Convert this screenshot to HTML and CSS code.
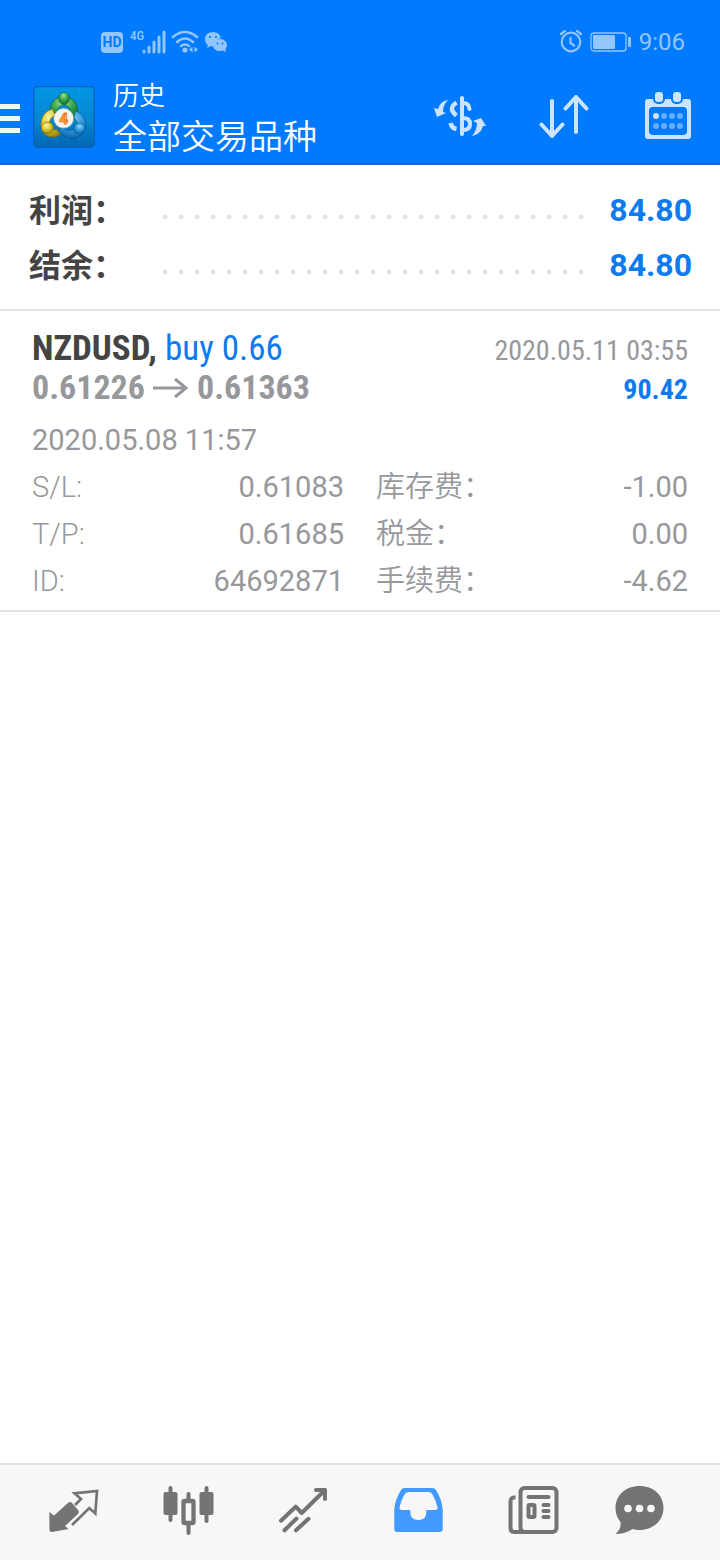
FILE: index.html
```
<!DOCTYPE html>
<html lang="zh-CN">
<head>
<meta charset="utf-8">
<meta name="viewport" content="width=device-width, initial-scale=1">
<title>历史</title>
<link rel="stylesheet" href="styles.css">
</head>
<body>
<div class="app">
  <header class="header">
    <div class="status">
      <div class="status-group">
        <span class="hd">HD</span>
        <span class="signal"><span class="signal-label">4G</span><svg width="24" height="24" viewBox="1 0 24 24" aria-hidden="true"><path d="M3 21v1M8 17v5M13 12v10M18 7v15M23 2v20" stroke="currentColor" stroke-width="3" stroke-linecap="round"/></svg></span>
        <svg width="28" height="24" viewBox="0 0 28 24" aria-hidden="true"><g fill="none" stroke="currentColor" stroke-width="2.6" stroke-linecap="round"><path d="M2 7Q14-3 26 7M6 12q8-7 16 0M10 16q4-3 8 0"/></g><circle cx="14" cy="20" r="2.6" fill="currentColor"/><path d="M21.500 16.500v6L18 19.500zM23.500 16.500v6l3.500-3z" fill="currentColor"/></svg>
        <svg width="24" height="24" viewBox="0 0 24 24" aria-hidden="true"><path d="M9 2C4 2 1 5 1 9q0 4 3 6l-1 3 4-2 4 .5Q10 9 17 8 15 2 9 2z" fill="currentColor"/><path d="M16 9c-4 0-7 3-7 6 0 4 3 6 7 6l3-.5 3 1.500-.6-3Q23 17 23 15c0-3-3-6-7-6z" fill="currentColor"/><g fill="#007aff"><circle cx="6" cy="7" r="1.100"/><circle cx="12" cy="7" r="1.100"/><circle cx="13.500" cy="13.500" r="1"/><circle cx="18.500" cy="13.500" r="1"/></g></svg>
      </div>
      <div class="status-group status-right">
        <svg width="24" height="24" viewBox="0 0 24 24" aria-hidden="true"><g fill="none" stroke="currentColor" stroke-width="2.200" stroke-linecap="round"><circle cx="12" cy="12" r="9.300"/><path d="M11.500 8v5l3.500 2.500M2 4l4-3M22 4l-4-3"/></g></svg>
        <svg width="42" height="24" viewBox="0 0 42 24" aria-hidden="true"><rect x="1" y="3" width="35" height="18" rx="3" fill="none" stroke="currentColor" stroke-width="1.300"/><rect x="3" y="5" width="22" height="14" rx="1" fill="currentColor"/><rect x="38" y="7" width="3" height="10" rx="1" fill="currentColor"/></svg>
        <time class="clock">9:06</time>
      </div>
    </div>
    <div class="bar">
      <button class="icon-button menu" aria-label="菜单"><span class="menu-line"></span><span class="menu-line"></span><span class="menu-line"></span></button>
      <svg class="logo" viewBox="25 25 184 184" aria-hidden="true">
        <defs>
          <linearGradient id="tile" x1="0" y1="0" x2="0" y2="1"><stop offset="0" stop-color="#0096e4"/><stop offset=".55" stop-color="#0586d0"/><stop offset="1" stop-color="#0365b4"/></linearGradient>
          <radialGradient id="green" cx=".45" cy=".25" r=".8"><stop offset="0" stop-color="#9ce394"/><stop offset=".5" stop-color="#35a34a"/><stop offset="1" stop-color="#126b2b"/></radialGradient>
          <radialGradient id="yellow" cx=".4" cy=".3" r=".8"><stop offset="0" stop-color="#f8f29a"/><stop offset=".5" stop-color="#d6c52c"/><stop offset="1" stop-color="#8d7d0d"/></radialGradient>
          <radialGradient id="blue" cx=".5" cy=".3" r=".8"><stop offset="0" stop-color="#8dd7f8"/><stop offset=".5" stop-color="#2b94d9"/><stop offset="1" stop-color="#075a9d"/></radialGradient>
        </defs>
        <rect x="27" y="27" width="180" height="180" rx="12" fill="url(#tile)" stroke="#075fc0" stroke-width="4"/>
        <path d="M60 29v176M94 29v176M128 29v176M162 29v176M29 60h176M29 94h176M29 128h176M29 162h176" stroke="#49b9ee" stroke-opacity=".2" stroke-width="2"/>
        <path d="M76 99q0-32 28-42h26q30 14 28 50l-8 18-14-7q6-30-18-38-20 3-25 26z" fill="url(#green)" stroke="#0c5c34" stroke-width="2"/>
        <path d="M83 93Q49 102 48 142q6 38 44 34l16-8-7-14q-22 4-28-12 1-24 18-30z" fill="url(#yellow)" stroke="#75680c" stroke-width="2"/>
        <path d="M151 98q32 13 31 45-5 36-41 37-25 0-43-24l10-12q20 20 42 8 14-15-3-33z" fill="url(#blue)" stroke="#075492" stroke-width="2"/>
        <ellipse cx="117" cy="62" rx="16" ry="18" fill="url(#green)" stroke="#0e6432" stroke-width="2"/>
        <ellipse cx="68" cy="149" rx="18" ry="17" fill="url(#yellow)" stroke="#75680c" stroke-width="2"/>
        <ellipse cx="163" cy="151" rx="17" ry="16" fill="url(#blue)" stroke="#075492" stroke-width="2"/>
        <circle cx="116" cy="121" r="29" fill="#f5f4f1" stroke="#c5cbbf" stroke-width="2"/>
        <text class="logo-digit" x="116" y="138" text-anchor="middle">4</text>
      </svg>
      <div class="titles">
        <h1 class="title">历史</h1>
        <p class="subtitle">全部交易品种</p>
      </div>
      <div class="actions">
        <button class="icon-button" aria-label="交易品种"><svg width="52" height="52" viewBox="0 0 52 52" aria-hidden="true"><path d="M28 8v36M29 13q6 0 6.500 6M29 28q7 0 7 6t-7 6" fill="none" stroke="currentColor" stroke-width="4" stroke-linecap="round"/><path d="M22.500 12.500q-9 6 0 13M16.500 33q1 5 6 6" fill="none" stroke="currentColor" stroke-width="4.500"/><path d="M14 10Q6 11 4 19l-4-1 3 9 9-4-3-1q0-7 5-12zM38 46q9-2 11-10h3l-5-8-8 3 4 2q0 7-5 13z" fill="currentColor"/></svg></button>
        <button class="icon-button" aria-label="排序"><svg width="52" height="52" viewBox="0 0 52 52" aria-hidden="true"><path d="M14 11v35M3.500 34.500L14 46l10.500-11.500M38 42V7M27.500 18.500L38 7l10.500 11.500" fill="none" stroke="currentColor" stroke-width="4" stroke-linecap="round" stroke-linejoin="round"/></svg></button>
        <button class="icon-button" aria-label="日期"><svg width="52" height="52" viewBox="0 0 52 52" aria-hidden="true"><path fill-rule="evenodd" d="M6 9h40q3 0 3 3v34q0 3-3 3H6q-3 0-3-3V12q0-3 3-3zm5 8q-4 0-4 4v20q0 4 4 4h30q4 0 4-4V21q0-4-4-4z" fill="currentColor"/><g fill="currentColor" stroke="#007aff" stroke-width="2"><rect x="12" y="1" width="10" height="12" rx="4"/><rect x="30" y="1" width="10" height="12" rx="4"/></g><circle cx="14" cy="26" r="3" fill="currentColor"/><g fill="#63aeff"><circle cx="22" cy="26" r="3"/><circle cx="30" cy="26" r="3"/><circle cx="38" cy="26" r="3"/><circle cx="14" cy="36" r="3"/><circle cx="22" cy="36" r="3"/><circle cx="30" cy="36" r="3"/><circle cx="38" cy="36" r="3"/></g></svg></button>
      </div>
    </div>
  </header>

  <main class="content">
    <dl class="summary">
      <div class="summary-row"><dt class="summary-label">利润：</dt><dd class="summary-value">84.80</dd></div>
      <div class="summary-row"><dt class="summary-label">结余：</dt><dd class="summary-value">84.80</dd></div>
    </dl>
    <article class="deal">
      <div class="deal-line">
        <h2 class="deal-title">NZDUSD, <span class="deal-side">buy 0.66</span></h2>
        <time class="deal-time">2020.05.11 03:55</time>
      </div>
      <div class="deal-line">
        <p class="deal-prices"><span>0.61226</span><svg width="36" height="22" viewBox="0 0 36 22" role="img" aria-label="至"><path d="M0 11h33M22 2l11 9-11 9" fill="none" stroke="currentColor" stroke-width="3"/></svg><span>0.61363</span></p>
        <p class="deal-profit">90.42</p>
      </div>
      <time class="deal-opened">2020.05.08 11:57</time>
      <dl class="details">
        <div class="detail"><dt>S/L:</dt><dd>0.61083</dd></div>
        <div class="detail"><dt>库存费：</dt><dd>-1.00</dd></div>
        <div class="detail"><dt>T/P:</dt><dd>0.61685</dd></div>
        <div class="detail"><dt>税金：</dt><dd>0.00</dd></div>
        <div class="detail"><dt>ID:</dt><dd>64692871</dd></div>
        <div class="detail"><dt>手续费：</dt><dd>-4.62</dd></div>
      </dl>
    </article>
  </main>

  <nav class="tabs" aria-label="主导航">
    <button class="tab" aria-label="行情"><svg width="55" height="55" viewBox="0 0 55 55" aria-hidden="true"><path d="M3.300 27L8 30.500 22 18q2-2 4 0l6 7q1.500 2 0 4L19 41l3.500 3L6 47q-2.500 0-2.500-2z" fill="currentColor"/><path d="M29 20l6-6-6.500-5.700L51 6l-1.700 22.500L43.300 23 26 40" fill="none" stroke="currentColor" stroke-width="2.700"/></svg></button>
    <button class="tab" aria-label="图表"><svg width="55" height="55" viewBox="0 0 55 55" aria-hidden="true"><path d="M9.500 3v32M45.500 3v33M27.500 9v7M27.500 38v10" stroke="currentColor" stroke-width="4" stroke-linecap="round"/><rect x="2.500" y="7" width="14" height="23" rx="2" fill="currentColor"/><rect x="38.500" y="7" width="14" height="23" rx="2" fill="currentColor"/><rect x="22.500" y="16" width="10" height="22" rx="1" fill="none" stroke="currentColor" stroke-width="4.300"/></svg></button>
    <button class="tab" aria-label="交易"><svg width="55" height="55" viewBox="0 0 55 55" aria-hidden="true"><path d="M5 35.700l14.700-14 6 6.300L49 5M40 5h9v9M8.500 45.300l12-11.800M20 45.300l12.500-11.500" fill="none" stroke="currentColor" stroke-width="4" stroke-linecap="round" stroke-linejoin="round"/></svg></button>
    <button class="tab active" aria-label="历史" aria-current="page"><svg width="55" height="55" viewBox="0 0 55 55" aria-hidden="true"><path fill-rule="evenodd" d="M14 3h27q3 0 4 2 6 10 6.700 19v20q0 3-3 3H6.300q-3 0-3-3V24Q4 15 10 5q1-2 4-2zm3.500 4q-3 0-4 2.500-4 7-5 13-.5 2.500 2 2.500h8.800v2q0 8 8 8t8-8v-2h9.200q2.500 0 2-2.500-1-6-5-13-1-2.500-4-2.500z" fill="currentColor"/></svg></button>
    <button class="tab" aria-label="新闻"><svg width="55" height="55" viewBox="0 0 55 55" aria-hidden="true"><g fill="none" stroke="currentColor" stroke-width="4"><rect x="14.500" y="3" width="36" height="44" rx="4"/><path d="M9.500 12.500q-5-.5-5 4V43q0 4 4 4H18"/><rect x="22.500" y="20" width="6" height="12" rx="1"/><path d="M22.500 12h20M37.500 20h5M37.500 26h5M37.500 32h5" stroke-linecap="round"/></g></svg></button>
    <button class="tab" aria-label="信息"><svg width="55" height="55" viewBox="0 0 55 55" aria-hidden="true"><path d="M27.500 1c14 0 24 9 24 22s-11 22-24 22q-4 0-7-1-7 5-17 5 6-5 5-12-5-6-5-14C3.500 10 14 1 27.500 1z" fill="currentColor"/><g fill="#f7f7f7"><circle cx="16" cy="23.500" r="3.800"/><circle cx="27.500" cy="23.500" r="3.800"/><circle cx="39" cy="23.500" r="3.800"/></g></svg></button>
  </nav>
</div>
</body>
</html>
```
FILE: styles.css
```
* { box-sizing: border-box; }

body {
  margin: 0;
  background: #fff;
  color: #97989b;
  font-family: Roboto, "Noto Sans CJK SC", sans-serif;
}

h1, h2, p, dl, dt, dd { margin: 0; font-weight: inherit; }

button {
  margin: 0;
  padding: 0;
  border: 0;
  background: none;
  color: inherit;
  cursor: pointer;
}

svg { display: block; flex: none; }

.app {
  display: flex;
  flex-direction: column;
  min-height: 100vh;
}

.header {
  background: #007aff;
  border-bottom: 2px solid #0a6bd6;
}

.status {
  display: flex;
  justify-content: space-between;
  height: 84px;
  padding: 0 35px 0 101px;
  color: #93c5ff;
}

.status-group {
  display: flex;
  align-items: center;
  gap: 5px;
}

.status-right { gap: 7px; }

.hd {
  width: 22px;
  border-radius: 4px;
  background: #93c5ff;
  color: #007aff;
  font-size: 14px;
  font-weight: 700;
  line-height: 21px;
  text-align: center;
}

.signal { display: flex; align-items: flex-start; margin-left: 2px; }

.signal-label {
  width: 12px;
  font-family: "Roboto Condensed", Roboto, sans-serif;
  font-size: 13px;
  font-weight: 500;
  line-height: 12px;
}

.clock { font-size: 24px; line-height: 28px; }

.bar {
  display: flex;
  align-items: center;
  height: 79px;
  padding-right: 26px;
  color: #cce4ff;
}

.menu {
  display: grid;
  gap: 7px;
  width: 20px;
  padding-bottom: 10px;
}

.menu-line { height: 5px; background: #f0f7ff; }

.logo {
  width: 62px;
  height: 62px;
  margin: 0 18px 14px 13px;
}

.logo-digit {
  fill: #ffc27a;
  stroke: #ef7d1c;
  stroke-width: 3px;
  font-size: 46px;
  font-weight: 700;
}

.titles { padding-bottom: 12px; color: #fff; font-weight: 350; }

.title { font-size: 26px; line-height: 38px; }

.subtitle { font-size: 34px; line-height: 44px; }

.actions {
  display: flex;
  gap: 52px;
  margin-left: auto;
  padding-bottom: 15px;
}

.content { flex: 1; }

.summary {
  padding: 17px 28px 17px 29px;
  border-bottom: 2px solid #e3e3e3;
}

.summary-row {
  display: flex;
  align-items: center;
  height: 55px;
  font-size: 32px;
  font-weight: 700;
}

.summary-label {
  flex: none;
  width: 128px;
  padding-bottom: 4px;
  color: #444;
}

.summary-value {
  display: flex;
  flex: 1;
  align-items: center;
  color: #0c7bf0;
}

.summary-value::before {
  content: "";
  flex: 1;
  height: 16px;
  margin: 14px 20px 0 0;
  background: radial-gradient(circle, #e4e4e4 2px, transparent 3px) 0 0 / 16px 16px;
}

.deal {
  padding: 18px 32px 5px;
  border-bottom: 2px solid #e3e3e3;
}

.deal-line {
  display: flex;
  align-items: baseline;
  justify-content: space-between;
  height: 39px;
  font-family: "Roboto Condensed", Roboto, sans-serif;
  line-height: 39px;
}

.deal-title { color: #444; font-size: 35px; font-weight: 700; }

.deal-side { color: #0c7bf0; font-weight: 400; }

.deal-time { font-size: 28px; }

.deal-prices {
  display: flex;
  align-items: center;
  gap: 8px;
  font-size: 34px;
  font-weight: 700;
}

.deal-profit { color: #0c7bf0; font-size: 28px; font-weight: 700; }

.deal-opened {
  display: block;
  margin-top: 10px;
  font-size: 29px;
  line-height: 47px;
}

.details {
  display: grid;
  grid-template-columns: 1fr 1fr;
  column-gap: 32px;
  font-size: 29px;
  line-height: 47px;
}

.detail {
  display: flex;
  justify-content: space-between;
  height: 47px;
}

.detail dt { font-weight: 350; }

.tabs {
  position: sticky;
  bottom: 0;
  display: grid;
  grid-template-columns: repeat(5, 115fr) 96fr;
  padding: 20px 33px 20px 16px;
  border-top: 2px solid #e2e2e2;
  background: #f7f7f7;
  color: #747474;
}

.tab { display: flex; justify-content: center; }

.active { color: #429aff; }
```
